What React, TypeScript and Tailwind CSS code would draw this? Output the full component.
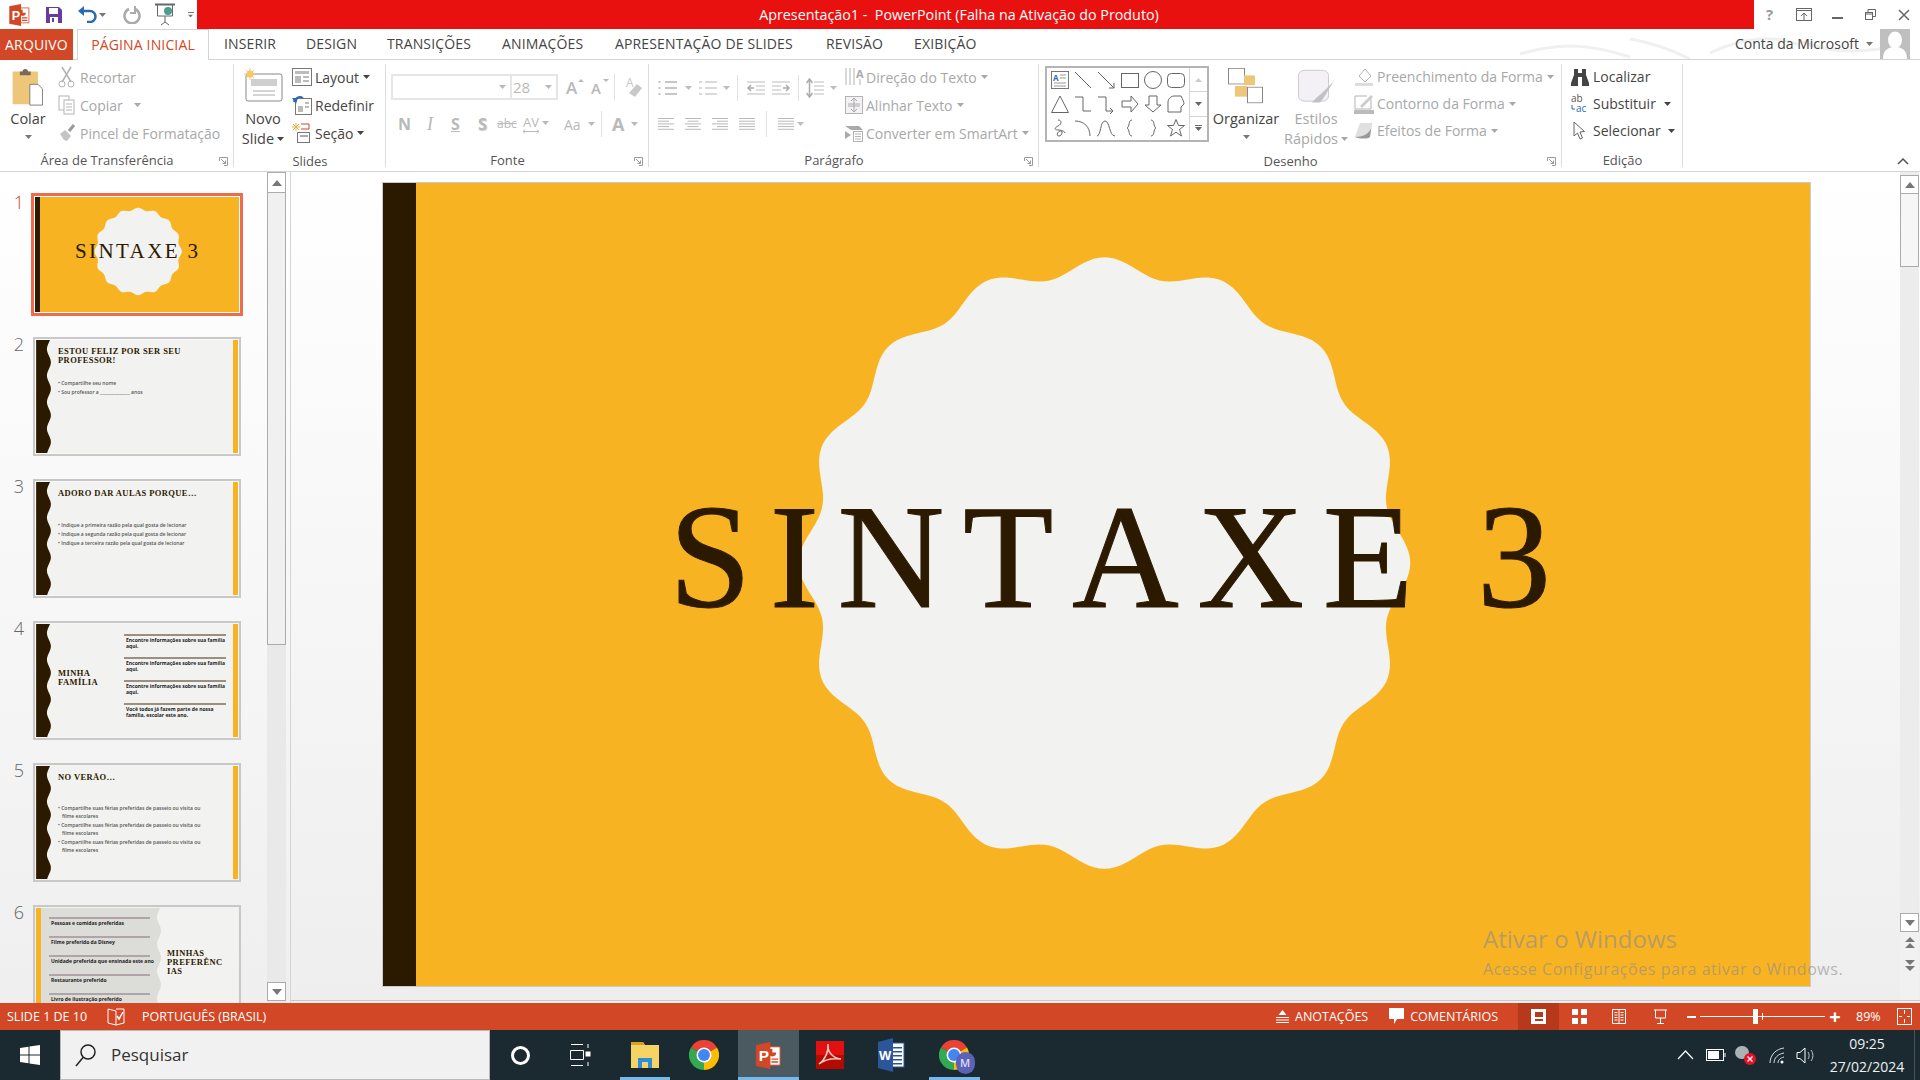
import { ReactNode } from "react";

const sans = "font-['Open_Sans','Noto_Sans',sans-serif]";
const serif = "font-['Liberation_Serif',serif]";

// scalloped badge of the title slide
function badgePath(cx: number, cy: number, r: number, amp: number) {
  const pts: string[] = [];
  for (let i = 0; i < 360; i++) {
    const t = (i * Math.PI) / 180;
    const rad = r + amp * Math.cos(16 * t);
    pts.push(`${(cx + rad * Math.sin(t)).toFixed(1)} ${(cy - rad * Math.cos(t)).toFixed(1)}`);
  }
  return "M" + pts.join("L") + "Z";
}

function wavePath(w: number, h: number, amp: number, period: number) {
  let d = "M0 0";
  for (let y = 0; y <= h; y += 1) {
    const x = w - amp / 2 + (amp / 2) * Math.cos((y * 2 * Math.PI) / period + 1);
    d += `L${x.toFixed(2)} ${y}`;
  }
  return d + `L0 ${h}Z`;
}

function Caret({ className = "" }: { className?: string }) {
  return (
    <svg width="7" height="4" viewBox="0 0 7 4" className={`shrink-0 ${className}`}>
      <path d="M0 0h7L3.5 4z" fill="currentColor" />
    </svg>
  );
}

function Launcher({ className = "" }: { className?: string }) {
  return (
    <svg width="9" height="9" viewBox="0 0 9 9" className={className} fill="none" stroke="#9a9a9a">
      <path d="M.5 4V.5H8.500V8.500H5" />
      <path d="M2 2l4.500 4.500M6.500 3.500v3h-3" />
    </svg>
  );
}

function Ico({ w = 20, h = 20, children }: { w?: number; h?: number; children: ReactNode }) {
  return (
    <svg width={w} height={h} viewBox={`0 0 ${w} ${h}`} fill="none" className="shrink-0 overflow-visible">
      {children}
    </svg>
  );
}

function PptLogo({ w = 26, h = 28 }: { w?: number; h?: number }) {
  return (
    <svg width={w} height={h} viewBox="0 0 26 28">
      <rect x="11" y="5" width="14" height="19" fill="#fff" stroke="#d24726" />
      <path d="M17 7a4 4 0 1 0 4 4h-4z" fill="#d24726" />
      <path d="M16 17h7v1.500h-7zM16 20h7v1.500h-7z" fill="#d24726" />
      <path d="M0 3L15 0V28L0 25z" fill="#d24726" />
      <text x="3" y="20" fontSize="16" fontWeight="700" fill="#fff" fontFamily="Liberation Sans, sans-serif">
        P
      </text>
    </svg>
  );
}

function WordLogo() {
  return (
    <svg width="27" height="34" viewBox="0 0 27 34">
      <rect x="12" y="5" width="14" height="24" fill="#fff" stroke="#2b579a" />
      <path d="M15 9h9v1.500h-9zM15 13h9v1.500h-9zM15 17h9v1.500h-9zM15 21h9v1.500h-9zM15 25h9v1.500h-9z" fill="#2b579a" />
      <path d="M0 4L15 0V34L0 30z" fill="#2b579a" />
      <text x="1" y="22" fontSize="13" fontWeight="700" fill="#fff" fontFamily="Liberation Sans, sans-serif">
        W
      </text>
    </svg>
  );
}

function ChromeLogo({ size = 30 }: { size?: number }) {
  return (
    <svg width={size} height={size} viewBox="0 0 48 48">
      <path d="M24 24L3.200 12A24 24 0 0 1 44.800 12Z" fill="#ea4335" />
      <path d="M24 24L44.800 12A24 24 0 0 1 24 48Z" fill="#fbbc05" />
      <path d="M24 24L24 48A24 24 0 0 1 3.200 12Z" fill="#34a853" />
      <circle cx="24" cy="24" r="12" fill="#fff" />
      <circle cx="24" cy="24" r="9.500" fill="#4285f4" />
    </svg>
  );
}

function Row({
  icon,
  label,
  on = false,
  caret = false,
  h = "h-[28px]",
  gap = "gap-[5px]",
  caretClass = "ml-[1px]",
}: {
  icon: ReactNode;
  label: string;
  on?: boolean;
  caret?: boolean;
  h?: string;
  gap?: string;
  caretClass?: string;
}) {
  return (
    <div className={`flex items-center ${h} ${gap} ${on ? "text-[#444]" : "text-[#a8a8a8]"}`}>
      {icon}
      <span className="whitespace-nowrap">{label}</span>
      {caret && <Caret className={caretClass} />}
    </div>
  );
}

function Group({
  label,
  width,
  launcher = false,
  children,
}: {
  label: string;
  width: string;
  launcher?: boolean;
  children: ReactNode;
}) {
  return (
    <div className={`relative flex flex-col shrink-0 h-full pt-[4px] ${width}`}>
      <div className="h-[84px] flex">{children}</div>
      <div className={`mt-[4px] h-[20px] flex items-center justify-center text-[13px] text-[#555] ${launcher ? "pr-[20px]" : ""}`}>
        {label}
      </div>
      {launcher && <Launcher className="absolute right-[6px] bottom-[5px]" />}
      <div className="absolute right-0 top-[4px] bottom-[4px] w-px bg-[#dcdcdc]" />
    </div>
  );
}

function Shape({ children }: { children: ReactNode }) {
  return (
    <div className="flex items-center justify-center">
      <svg width="20" height="20" viewBox="0 0 20 20" fill="none" stroke="#666" strokeWidth="1">
        {children}
      </svg>
    </div>
  );
}

function BulletIcon({ numbered = false }: { numbered?: boolean }) {
  return (
    <Ico w={20} h={18}>
      {[0, 1, 2].map((i) => (
        <path
          key={i}
          d={`M${numbered ? 1 : 0.500} ${3 + i * 6}h${numbered ? 3 : 2}M7 ${3 + i * 6}h12`}
          stroke="#b5b5b5"
          strokeWidth={numbered ? 1 : 1.500}
        />
      ))}
    </Ico>
  );
}

function IndentIcon({ flip = false }: { flip?: boolean }) {
  return (
    <svg width="18" height="16" viewBox="0 0 18 16" fill="none" className={`shrink-0 ${flip ? "-scale-x-100" : ""}`} stroke="#bbb">
      <path d="M0 2h18M9 6h9M9 10h9M0 14h18" />
      <path d="M7 8H1M4 5L1 8l3 3" stroke="#aaa" strokeWidth="1.500" />
    </svg>
  );
}

function AlignIcon({ a }: { a: number }) {
  const rows = [16, 11, 16, 11, 16];
  return (
    <Ico w={16} h={14}>
      {rows.map((r, i) => {
        const w = a === 3 ? 16 : r;
        const x = a === 0 || a === 3 ? 0 : a === 1 ? (16 - w) / 2 : 16 - w;
        return <path key={i} d={`M${x} ${1.500 + i * 2.700}h${w}`} stroke="#b9b9b9" />;
      })}
    </Ico>
  );
}

function Ribbon() {
  const off = "#b3b3b3";
  return (
    <div className={`h-[112px] flex shrink-0 bg-white border-b border-[#d4d4d4] text-[14px] ${sans}`}>
      {/* Clipboard */}
      <Group label="Área de Transferência" width="w-[234px]" launcher>
        <div className="w-[56px] pt-[4px] flex flex-col items-center">
          <svg width="34" height="38" viewBox="0 0 34 42" className="shrink-0">
            <rect x="0" y="4" width="28" height="36" rx="1" fill="#eec67a" />
            <path d="M8 4h3a3 3 0 0 1 6 0h3v4H8z" fill="#7a6a5a" />
            <path d="M19 18h9l5 5v18H19z" fill="#fff" stroke="#777" />
          </svg>
          <span className="mt-[3px] leading-[20px] text-[#444] text-[14.500px]">Colar</span>
          <Caret className="mt-[6px] text-[#777]" />
        </div>
        <div className="ml-[2px] -mt-[1px] flex flex-col">
          <Row
            label="Recortar"
            icon={
              <Ico w={17} h={22}>
                <path d="M4 1l9 15M13 1L4 16" stroke={off} strokeWidth="1.500" />
                <circle cx="4" cy="18" r="3" stroke={off} />
                <circle cx="13" cy="18" r="3" stroke={off} />
              </Ico>
            }
          />
          <Row
            label="Copiar"
            caret
            caretClass="ml-[6px]"
            icon={
              <Ico w={17} h={20}>
                <rect x="1" y="1" width="10" height="14" fill="#fff" stroke={off} />
                <rect x="6" y="5" width="10" height="14" fill="#fff" stroke={off} />
                <path d="M8 9h6M8 12h6M8 15h6" stroke={off} />
              </Ico>
            }
          />
          <Row
            label="Pincel de Formatação"
            icon={
              <Ico w={17} h={18}>
                <path d="M2 10l5-4 6 6-4 5-3-1-2-3z" fill="#c4c4c4" />
                <path d="M11 7l5-6" stroke="#999" strokeWidth="3" />
              </Ico>
            }
          />
        </div>
      </Group>

      {/* Slides */}
      <Group label="Slides" width="w-[152px]">
        <div className="w-[54px] pl-[4px] pt-[4px] flex flex-col items-center">
          <svg width="40" height="34" viewBox="0 0 40 34" className="shrink-0">
            <rect x="3" y="6" width="36" height="27" rx="2" fill="#fff" stroke="#888" />
            <rect x="8" y="11" width="26" height="7" fill="#cfcfcf" />
            <path d="M10 23h22M10 27h22" stroke="#aaa" />
            <circle cx="7" cy="6" r="3.500" fill="#f5c76a" />
            <path d="M7 0v12M1 6h12M3 2l8 8M11 2l-8 8" stroke="#f5c76a" />
          </svg>
          <span className="mt-[7px] leading-[20px] text-[#444] text-[14.500px]">Novo</span>
          <span className="flex items-center gap-[3px] leading-[20px] text-[#444] text-[14.500px] whitespace-nowrap">
            Slide <Caret />
          </span>
        </div>
        <div className="ml-[4px] -mt-[1px] flex flex-col">
          <Row
            on
            caret
            gap="gap-[3px]"
            label="Layout"
            icon={
              <Ico w={20} h={20}>
                <rect x=".5" y="1.500" width="19" height="17" stroke="#777" fill="#fff" />
                <path d="M3 4h14v3H3z" fill="#bbb" />
                <path d="M3 9h6v7H3zM11 9h6v2h-6zM11 13h6v2h-6z" fill="#bbb" />
              </Ico>
            }
          />
          <Row
            on
            gap="gap-[3px]"
            label="Redefinir"
            icon={
              <Ico w={20} h={22}>
                <rect x="3.500" y="4.500" width="16" height="16" stroke="#777" fill="#fff" />
                <path d="M6 12h5v6H6zM13 8h4v2h-4zM13 12h4v2h-4z" fill="#bbb" />
                <path d="M2 8a6 6 0 0 1 9-4" stroke="#2b6cb0" strokeWidth="2" />
                <path d="M0 4l4 6 2-6z" fill="#2b6cb0" />
              </Ico>
            }
          />
          <Row
            on
            caret
            gap="gap-[3px]"
            label="Seção"
            icon={
              <Ico w={20} h={22}>
                <path d="M4 1v8M0 5h8M1 2l6 6M7 2L1 8" stroke="#e9b44c" />
                <path d="M9 2h8v5H9" stroke="#d24726" />
                <rect x="5.500" y="10.500" width="12" height="10" stroke="#777" fill="#fff" />
                <rect x="8" y="13" width="8" height="2" fill="#aaa" />
              </Ico>
            }
          />
        </div>
      </Group>

      {/* Fonte */}
      <Group label="Fonte" width="w-[263px]" launcher>
        <div className="pl-[5px] flex flex-col text-[#b9b9b9]">
          <div className="mt-[10px] h-[26px] flex items-center">
            <div className="w-[167px] h-[26px] flex border-2 border-[#e6e6e6]">
              <div className="w-[119px] flex items-center justify-end pr-[4px] border-r-2 border-[#e6e6e6]">
                <Caret />
              </div>
              <div className="flex-1 flex items-center justify-between pl-[1px] pr-[4px] text-[15px] leading-none">
                28 <Caret />
              </div>
            </div>
            <div className="ml-[7px] w-[25px]">
              <Ico w={20} h={20}>
                <text x="1" y="17" fontSize="17" fontWeight="600" fill="#b9b9b9">A</text>
                <path d="M13 5l3-3 3 3z" fill="#b9b9b9" />
              </Ico>
            </div>
            <div className="w-[24px]">
              <Ico w={20} h={20}>
                <text x="1" y="17" fontSize="15" fontWeight="600" fill="#b9b9b9">A</text>
                <path d="M13 2l3 3 3-3z" fill="#b9b9b9" />
              </Ico>
            </div>
            <div className="w-px h-[26px] bg-[#e2e2e2]" />
            <div className="ml-[10px]">
              <Ico w={18} h={22}>
                <text x="1" y="11" fontSize="12" fill="#c8c8c8">A</text>
                <path d="M4 17l8-9 5 4-7 9z" fill="#c8c8c8" />
              </Ico>
            </div>
          </div>
          <div className="mt-[10px] h-[28px] flex items-center text-[16px]">
            <span className="w-[28px] pl-[7px] font-bold">N</span>
            <span className={`w-[26px] pl-[8px] italic ${serif} text-[18px]`}>I</span>
            <span className="w-[26px] pl-[6px] font-bold underline">S</span>
            <span className="w-[26px] pl-[7px] font-bold [text-shadow:1px_1px_1px_#ccc]">S</span>
            <span className="w-[26px] text-[12px] line-through">abc</span>
            <span className="w-[41px] flex items-start gap-[3px]">
              <span className="flex flex-col items-center text-[13px] leading-[14px]">
                AV
                <svg width="16" height="5" viewBox="0 0 16 5" fill="none" stroke="#b9b9b9">
                  <path d="M0 2.500h16M2 .5L0 2.500l2 2M14 .5l2 2-2 2" />
                </svg>
              </span>
              <Caret className="mt-[6px]" />
            </span>
            <span className="w-[24px] text-[14px]">Aa</span>
            <Caret className="mr-[6px]" />
            <div className="w-px h-[26px] bg-[#e2e2e2]" />
            <span className="ml-[10px] text-[18px] font-bold">A</span>
            <Caret className="ml-[7px]" />
          </div>
        </div>
      </Group>

      {/* Parágrafo */}
      <Group label="Parágrafo" width="w-[390px]" launcher>
        <div className="pl-[9px] w-[196px] flex flex-col">
          <div className="mt-[9px] h-[30px] flex items-center text-[#bdbdbd]">
            <BulletIcon />
            <Caret className="ml-[7px] mr-[6px]" />
            <BulletIcon numbered />
            <Caret className="ml-[5px] mr-[7px]" />
            <div className="w-px h-[26px] bg-[#e2e2e2]" />
            <div className="ml-[9px] mr-[7px]"><IndentIcon /></div>
            <IndentIcon flip />
            <div className="ml-[8px] w-px h-[26px] bg-[#e2e2e2]" />
            <svg width="18" height="20" viewBox="0 0 18 20" fill="none" stroke="#bbb" className="ml-[7px] shrink-0">
              <path d="M8 4h10M8 8h10M8 12h10M8 16h10" />
              <path d="M3.500 1v18M0.500 5l3-4 3 4M0.500 15l3 4 3-4" stroke="#aaa" strokeWidth="1.500" />
            </svg>
            <Caret className="ml-[6px]" />
          </div>
          <div className="mt-[6px] h-[30px] flex items-center gap-[11px] text-[#bdbdbd]">
            <AlignIcon a={0} />
            <AlignIcon a={1} />
            <AlignIcon a={2} />
            <AlignIcon a={3} />
            <div className="w-px h-[26px] bg-[#e2e2e2]" />
            <div className="flex items-center gap-[3px]">
              <AlignIcon a={3} />
              <Caret />
            </div>
          </div>
        </div>
        <div className="-mt-[1px] flex flex-col">
          <Row
            label="Direção do Texto"
            caret
            gap="gap-[3px]"
            icon={
              <Ico w={18} h={20}>
                <path d="M1 1v17M5 1v17M9 1v17" stroke={off} />
                <text x="11" y="11" fontSize="11" fill="#aaa" fontWeight="700">A</text>
                <path d="M15 12v6" stroke={off} />
              </Ico>
            }
          />
          <Row
            label="Alinhar Texto"
            caret
            gap="gap-[3px]"
            icon={
              <Ico w={18} h={20}>
                <rect x=".5" y="1.500" width="17" height="17" stroke={off} fill="#f4f1f6" />
                <path d="M9 3v14M6 6l3-3 3 3M6 14l3 3 3-3M3 9h12M3 11h12" stroke="#aaa" />
              </Ico>
            }
          />
          <Row
            label="Converter em SmartArt"
            caret
            gap="gap-[3px]"
            icon={
              <Ico w={18} h={20}>
                <path d="M0 3h14l4 4H6z" fill="#aaa" />
                <rect x="8.500" y="8.500" width="9" height="10" stroke={off} fill="#fff" />
                <path d="M10 11h6M10 13.500h6M10 16h6" stroke={off} />
                <path d="M0 8l6 4-6 4z" fill="#aaa" />
              </Ico>
            }
          />
        </div>
      </Group>

      {/* Desenho */}
      <Group label="Desenho" width="w-[523px]" launcher>
        <div className="ml-[6px] mt-[2px] w-[164px] h-[76px] flex border-2 border-[#b4b4b4] shrink-0">
          <div className="flex-1 grid grid-cols-6 grid-rows-3 px-[1px]">
            <Shape>
              <rect x="1.500" y="1.500" width="17" height="17" stroke="#777" />
              <text x="3" y="11" fontSize="8" fill="#2b6cb0" stroke="none" fontWeight="700">A</text>
              <path d="M10 5h6M10 8h6M4 13h12M4 16h12" stroke="#999" />
            </Shape>
            <Shape><path d="M2 2l16 16" /></Shape>
            <Shape><path d="M2 2l16 16M18 13v5h-5" /></Shape>
            <Shape><rect x="1.500" y="3.500" width="17" height="14" /></Shape>
            <Shape><circle cx="10" cy="10" r="8.500" /></Shape>
            <Shape><rect x="1.500" y="3.500" width="17" height="14" rx="4" /></Shape>
            <Shape><path d="M10 2L18.500 18.500H1.500z" /></Shape>
            <Shape><path d="M2 3h8v14h8" /></Shape>
            <Shape><path d="M2 3h8v14h7M14 14l3 3-3 3" /></Shape>
            <Shape><path d="M2 7h9V2l7 8-7 8v-5H2z" /></Shape>
            <Shape><path d="M6 2h8v9h4l-8 7-8-7h4z" /></Shape>
            <Shape><path d="M2 18V8c0-3 3-6 6-6h7c2 4 3 6 3 8l-3 3v5z" /></Shape>
            <Shape><path d="M8 2c4 0 4 4 0 6s-4 4 1 4 3 6 0 6-2-4 1-5 5 1 5 2" /></Shape>
            <Shape><path d="M2 3c9 0 15 6 15 15" /></Shape>
            <Shape><path d="M1 18c4 0 3-15 8-15s4 15 10 15" /></Shape>
            <Shape><path d="M12 2c-4 0-2 7-5 8 3 1 1 8 5 8" /></Shape>
            <Shape><path d="M8 2c4 0 2 7 5 8-3 1-1 8-5 8" /></Shape>
            <Shape><path d="M10 1.500l2.500 6h6l-5 4 2 6.500-5.500-3.800L4.500 18l2-6.500-5-4h6z" /></Shape>
          </div>
          <div className="w-[18px] flex flex-col border-l border-[#d4d4d4] text-[#666]">
            <div className="flex-1 flex items-center justify-center border-b border-[#d4d4d4] text-[#ccc]"><Caret className="rotate-180" /></div>
            <div className="flex-1 flex items-center justify-center border-b border-[#d4d4d4]"><Caret /></div>
            <div className="flex-1 flex flex-col items-center justify-center gap-[1px]">
              <div className="w-[7px] h-px bg-[#666]" />
              <Caret />
            </div>
          </div>
        </div>
        <div className="ml-[2px] w-[70px] pt-[4px] flex flex-col items-center shrink-0">
          <svg width="36" height="36" viewBox="0 0 36 44" preserveAspectRatio="none" className="shrink-0">
            <rect x="0.500" y="0.500" width="16" height="19" fill="#fff" stroke="#888" />
            <rect x="16" y="9" width="11" height="12" fill="#eec67a" />
            <rect x="7" y="22" width="12" height="13" fill="#eec67a" />
            <rect x="19.500" y="23.500" width="15" height="19" fill="#fff" stroke="#888" />
          </svg>
          <span className="mt-[5px] leading-[20px] text-[#444] text-[14.500px]">Organizar</span>
          <Caret className="mt-[6px] text-[#777]" />
        </div>
        <div className="w-[70px] pt-[5px] flex flex-col items-center text-[#a8a8a8] text-[14.500px] shrink-0">
          <svg width="36" height="36" viewBox="0 0 36 42" preserveAspectRatio="none" className="shrink-0">
            <rect x="0.500" y="1.500" width="30" height="36" rx="6" fill="#f3f0f6" stroke="#c9c9c9" />
            <path d="M36 14L24 28l-5 5-5 6h8l4-6z" fill="#c2c2c2" />
          </svg>
          <span className="leading-[20px] mt-[4px]">Estilos</span>
          <span className="leading-[20px] flex items-center gap-[3px] whitespace-nowrap">
            Rápidos <Caret />
          </span>
        </div>
        <div className="ml-[3px] -mt-[1px] flex flex-col">
          <Row
            label="Preenchimento da Forma"
            caret
            h="h-[27px]"
            gap="gap-[3px]"
            icon={
              <Ico w={20} h={20}>
                <path d="M5 9l6-7 6 7-6 6z" stroke={off} />
                <path d="M1 16h18v3H1z" fill="#ddd" />
              </Ico>
            }
          />
          <Row
            label="Contorno da Forma"
            caret
            h="h-[27px]"
            gap="gap-[3px]"
            icon={
              <Ico w={20} h={20}>
                <path d="M17 5v10H1V2h12" stroke={off} />
                <path d="M6 12L17 1l2 2L8 14z" fill="#ccc" />
                <path d="M0 16h20v4H0z" fill="#bbb" />
              </Ico>
            }
          />
          <Row
            label="Efeitos de Forma"
            caret
            h="h-[27px]"
            gap="gap-[3px]"
            icon={
              <Ico w={20} h={20}>
                <path d="M6 2h12l-2 14H1z" fill="#e0e0e0" />
                <path d="M1 16C6 18 14 18 16 16l2-14c0 10-8 14-17 14z" fill="#999" />
              </Ico>
            }
          />
        </div>
      </Group>

      {/* Edição */}
      <Group label="Edição" width="w-[121px]">
        <div className="pl-[9px] -mt-[1px] flex flex-col">
          <Row
            on
            label="Localizar"
            h="h-[27px]"
            gap="gap-[4px]"
            icon={
              <Ico w={18} h={18}>
                <path d="M3 1h4v4h4V1h4v6l3 8v3h-7V9H7v9H0v-3l3-8z" fill="#444" />
              </Ico>
            }
          />
          <Row
            on
            caret
            caretClass="ml-[4px]"
            label="Substituir"
            h="h-[27px]"
            gap="gap-[4px]"
            icon={
              <Ico w={18} h={22}>
                <text x="0" y="9" fontSize="10" fill="#555">ab</text>
                <text x="5" y="19" fontSize="10" fill="#2b6cb0">ac</text>
                <path d="M1 12v4h3" stroke="#2b6cb0" />
              </Ico>
            }
          />
          <Row
            on
            caret
            label="Selecionar"
            h="h-[27px]"
            gap="gap-[6px]"
            icon={
              <Ico w={16} h={20}>
                <path d="M3 1v14l3.500-3 2.500 6 2.500-1-2.500-6 4.500-.5z" stroke="#666" />
              </Ico>
            }
          />
        </div>
      </Group>

      <div className="flex-1 relative">
        <svg width="12" height="7" viewBox="0 0 12 7" className="absolute right-[11px] bottom-[6px]" fill="none" stroke="#555" strokeWidth="1.500">
          <path d="M1 6l5-5 5 5" />
        </svg>
      </div>
    </div>
  );
}

function TitleBar() {
  return (
    <div className={`h-[29px] flex shrink-0 bg-white ${sans}`}>
      <div className="w-[197px] flex items-center pl-[9px]">
        <PptLogo w={21} h={22} />
        <svg width="18" height="18" viewBox="0 0 18 18" className="ml-[15px]">
          <path d="M1 1h13l3 3v13H1z" fill="#6b3a9e" />
          <rect x="4" y="2" width="9" height="6" fill="#fff" />
          <rect x="5" y="11" width="8" height="6" fill="#fff" />
          <rect x="7" y="12" width="2" height="4" fill="#6b3a9e" />
        </svg>
        <svg width="19" height="17" viewBox="0 0 19 17" fill="none" className="ml-[15px]">
          <path d="M4 5h8a5.500 5.500 0 0 1 0 11H9" stroke="#2b6cb0" strokeWidth="2.500" />
          <path d="M6 0v10L0 5z" fill="#2b6cb0" />
        </svg>
        <Caret className="ml-[2px] text-[#777]" />
        <svg width="18" height="19" viewBox="0 0 18 19" fill="none" className="ml-[17px]">
          <path d="M6 4a7.500 7.500 0 1 0 6 0" stroke="#aaa" strokeWidth="2.500" />
          <path d="M12 1v7h-5" stroke="#aaa" strokeWidth="2" />
        </svg>
        <svg width="20" height="24" viewBox="0 0 20 24" fill="none" className="ml-[14px]">
          <path d="M0 1.500h20" stroke="#666" strokeWidth="2" />
          <path d="M2.500 2v11h15V2" stroke="#666" />
          <circle cx="13" cy="8" r="4" fill="#4a9e8e" />
          <path d="M10 13v6M6 22l4-3 4 3" stroke="#666" />
        </svg>
        <div className="ml-[12px] flex flex-col items-center gap-[1px] text-[#777]">
          <div className="w-[6px] h-px bg-[#777]" />
          <Caret className="scale-75" />
        </div>
      </div>
      <div className="flex-1 flex items-center justify-center pr-[33px] bg-[#e91010] text-white text-[14.300px] whitespace-pre">
        Apresentação1 -  PowerPoint (Falha na Ativação do Produto)
      </div>
      <div className="w-[166px] flex items-center text-[#666]">
        <span className="w-[33px] pl-[12px] text-[15px] font-bold text-[#999]">?</span>
        <div className="w-[34px] flex justify-center">
          <svg width="16" height="13" viewBox="0 0 16 13" fill="none" stroke="#666">
            <rect x=".5" y=".5" width="15" height="12" />
            <path d="M0 2.500h16M8 12V5M5 8l3-3 3 3" />
          </svg>
        </div>
        <div className="w-[33px] flex justify-center pt-[7px]">
          <div className="w-[11px] h-[2px] bg-[#666]" />
        </div>
        <div className="w-[33px] flex justify-center">
          <svg width="11" height="11" viewBox="0 0 11 11" fill="none" stroke="#666">
            <rect x=".5" y="3.500" width="7" height="7" />
            <path d="M3 3V.5h7.500v7H8M0.500 5h7" />
          </svg>
        </div>
        <div className="w-[33px] flex justify-center">
          <svg width="12" height="12" viewBox="0 0 12 12" fill="none" stroke="#666" strokeWidth="1.500">
            <path d="M1 1l10 10M11 1L1 11" />
          </svg>
        </div>
      </div>
    </div>
  );
}

const tabs = [
  { name: "INSERIR", w: "w-[82px]" },
  { name: "DESIGN", w: "w-[81px]" },
  { name: "TRANSIÇÕES", w: "w-[115px]" },
  { name: "ANIMAÇÕES", w: "w-[113px]" },
  { name: "APRESENTAÇÃO DE SLIDES", w: "w-[211px]" },
  { name: "REVISÃO", w: "w-[88px]" },
  { name: "EXIBIÇÃO", w: "w-[90px]" },
];

function TabBar() {
  return (
    <div className={`relative h-[31px] flex shrink-0 bg-white border-b border-[#d4d4d4] text-[14px] tracking-[0.15px] ${sans}`}>
      <svg className="absolute right-0 top-0" width="420" height="30" viewBox="0 0 420 30" fill="none" stroke="#f0f0f0" strokeWidth="3">
        <path d="M20 25c40-12 70-10 110 3M130 10c30 5 50 15 60 20M210 24c30-14 60-20 90-8M300 12c30 12 60 14 110 2" />
      </svg>
      <div className="w-[73px] h-[31px] flex items-center justify-center pb-[1px] bg-[#d24726] text-white">ARQUIVO</div>
      <div className="ml-[4px] w-[132px] h-[31px] flex items-center justify-center pb-[1px] border border-b-0 border-[#d4d4d4] bg-white text-[#d24726] whitespace-nowrap z-10">
        PÁGINA INICIAL
      </div>
      {tabs.map((t) => (
        <div key={t.name} className={`${t.w} pl-[15px] pb-[1px] flex items-center text-[#444] whitespace-nowrap`}>
          {t.name}
        </div>
      ))}
      <div className="relative ml-auto flex items-center h-[30px] tracking-normal text-[#444]">
        <span className="whitespace-nowrap pb-[2px]">Conta da Microsoft</span>
        <Caret className="ml-[7px] text-[#777]" />
        <div className="ml-[7px] mr-[10px] w-[30px] h-[30px] bg-[#bfbfbf] overflow-hidden">
          <svg width="30" height="30" viewBox="0 0 30 30">
            <ellipse cx="15" cy="11" rx="7" ry="8.500" fill="#fff" />
            <path d="M3 30c0-9 5-12 12-12s12 3 12 12z" fill="#fff" />
          </svg>
        </div>
      </div>
    </div>
  );
}

function SideWave({ color = "#2c1a00" }: { color?: string }) {
  return (
    <svg width="15" height="115" viewBox="0 0 15 115" className="shrink-0 h-full">
      <path d={wavePath(15, 115, 4, 27)} fill={color} />
    </svg>
  );
}

function ThumbShell({ num, active = false, children }: { num: number; active?: boolean; children: ReactNode }) {
  return (
    <div className="flex shrink-0">
      <div className={`w-[33px] pr-[9px] text-right text-[18px] leading-[14px] font-light ${active ? "text-[#d24726]" : "text-[#666]"} ${sans}`}>
        {num}
      </div>
      <div
        className={`w-[208px] h-[119px] shrink-0 border-2 overflow-hidden ${
          active ? "border-white outline-[3px] outline-solid outline-[#ee6c4d] outline-offset-[-1px]" : "border-[#c8c8c8] p-px"
        }`}
      >
        {children}
      </div>
    </div>
  );
}

const thumbHead = `${serif} font-bold text-[8.500px] leading-[9px] tracking-[0.4px] text-[#2c1a00]`;
const thumbBody = `${sans} font-semibold text-[5px] text-[#555]`;

function BulletSlide({ title, lines, tall = false }: { title: string[]; lines: string[]; tall?: boolean }) {
  return (
    <div className="w-full h-full flex bg-[#f2f2f0]">
      <SideWave />
      <div className="flex-1 pl-[7px] pt-[7px] min-w-0">
        <div className={`h-[32px] ${thumbHead}`}>
          {title.map((t) => (
            <div key={t}>{t}</div>
          ))}
        </div>
        {lines.map((l, i) =>
          tall ? (
            <div key={i} className={`${thumbBody} pr-[28px] pl-[4px] -indent-[4px] leading-[7.500px] mb-[2px]`}>
              • {l}
            </div>
          ) : (
            <div key={i} className={`${thumbBody} leading-[9px] whitespace-nowrap`}>
              • {l}
            </div>
          ),
        )}
      </div>
      <div className="w-[5px] bg-[#f8b323] shrink-0" />
    </div>
  );
}

function FamilySlide() {
  const rows = [
    "Encontre informações sobre sua família aqui.",
    "Encontre informações sobre sua família aqui.",
    "Encontre informações sobre sua família aqui.",
    "Você todos já fazem parte de nossa família, escolar este ano.",
  ];
  return (
    <div className="w-full h-full flex bg-[#f2f2f0]">
      <SideWave />
      <div className={`w-[73px] pl-[7px] pt-[45px] ${thumbHead}`}>
        MINHA
        <br />
        FAMÍLIA
      </div>
      <div className="w-[102px] pt-[10px]">
        {rows.map((r, i) => (
          <div key={i} className={`h-[23px] border-t-2 border-[#9a9080] pl-[2px] pt-[1px] ${sans} text-[5px] leading-[6px] font-bold text-[#222]`}>
            {r}
          </div>
        ))}
      </div>
      <div className="ml-auto w-[5px] bg-[#f8b323]" />
    </div>
  );
}

function PrefsSlide() {
  const rows = [
    "Pessoas e comidas preferidas",
    "Filme preferido da Disney",
    "Unidade preferida que ensinada este ano",
    "Restaurante preferido",
    "Livro de ilustração preferido",
  ];
  return (
    <div className="w-full h-full flex bg-[#f2f2f0]">
      <div className="w-[5px] bg-[#f8b323] shrink-0" />
      <div className="w-[115px] shrink-0 bg-[#dcdcd8] pl-[8px] pr-[6px] pt-[9px]">
        {rows.map((r) => (
          <div key={r} className={`h-[19px] border-t-2 border-[#b0a4a8] pl-[2px] pt-[1px] ${sans} text-[5px] leading-[6px] font-bold text-[#222] whitespace-nowrap`}>
            {r}
          </div>
        ))}
      </div>
      <svg width="5" height="115" viewBox="0 0 5 115" className="shrink-0">
        <path d={wavePath(5, 115, 4, 27)} fill="#dcdcd8" />
      </svg>
      <div className={`pl-[6px] pt-[41px] ${thumbHead}`}>
        MINHAS
        <br />
        PREFERÊNC
        <br />
        IAS
      </div>
    </div>
  );
}

function ScrollBtn({ up = false, className = "" }: { up?: boolean; className?: string }) {
  return (
    <div className={`h-[19px] flex items-center justify-center text-[#777] shrink-0 ${className}`}>
      <svg width="10" height="6" viewBox="0 0 10 6" className={up ? "rotate-180" : ""}>
        <path d="M0 0h10L5 6z" fill="currentColor" />
      </svg>
    </div>
  );
}

function ThumbPane() {
  return (
    <div className="w-[291px] h-full flex shrink-0 border-r border-[#d4d4d4] bg-gradient-to-b from-white to-[#efefef]">
      <div className="w-[267px] flex flex-col gap-[23px] pt-[23px] overflow-hidden shrink-0">
        <ThumbShell num={1} active>
          <div className="relative w-full h-full flex bg-[#f8b323]">
            <div className="w-[5px] bg-[#2c1a00]" />
            <svg viewBox="0 0 1428 803" className="absolute inset-0 w-full h-full">
              <path d={badgePath(722, 380, 297, 9)} fill="#f2f2f0" />
            </svg>
            <div className={`absolute left-[40px] top-[44px] text-[21px] leading-none tracking-[2.400px] text-[#2c1a00] whitespace-pre ${serif}`}>
              SINTAXE 3
            </div>
          </div>
        </ThumbShell>
        <ThumbShell num={2}>
          <BulletSlide title={["ESTOU FELIZ POR SER SEU", "PROFESSOR!"]} lines={["Compartilhe seu nome", "Sou professor a ______________ anos"]} />
        </ThumbShell>
        <ThumbShell num={3}>
          <BulletSlide
            title={["ADORO DAR AULAS PORQUE…"]}
            lines={[
              "Indique a primeira razão pela qual gosta de lecionar",
              "Indique a segunda razão pela qual gosta de lecionar",
              "Indique a terceira razão pela qual gosta de lecionar",
            ]}
          />
        </ThumbShell>
        <ThumbShell num={4}>
          <FamilySlide />
        </ThumbShell>
        <ThumbShell num={5}>
          <BulletSlide
            tall
            title={["NO VERÃO…"]}
            lines={[
              "Compartilhe suas férias preferidas de passeio ou visita ou filme escolares",
              "Compartilhe suas férias preferidas de passeio ou visita ou filme escolares",
              "Compartilhe suas férias preferidas de passeio ou visita ou filme escolares",
            ]}
          />
        </ThumbShell>
        <ThumbShell num={6}>
          <PrefsSlide />
        </ThumbShell>
      </div>
      <div className="w-[19px] h-full flex flex-col bg-[#e9e9e9] shrink-0">
        <ScrollBtn up className="h-[21px] bg-white border border-[#ababab]" />
        <div className="h-[452px] bg-[#f0f0f0] border border-t-0 border-[#ababab] shrink-0" />
        <div className="flex-1" />
        <ScrollBtn className="bg-white border border-[#ababab] mb-[2px]" />
      </div>
    </div>
  );
}

function MainSlide() {
  return (
    <div className="relative w-[1427px] h-[803px] flex shrink-0 bg-[#f8b323] shadow-[0_0_0_1px_#c8ccd0]">
      <div className="w-[33px] h-full bg-[#2c1a00]" />
      <svg viewBox="0 0 1428 803" className="absolute inset-0 w-full h-full">
        <path d={badgePath(722, 380, 297, 9)} fill="#f2f2f0" />
      </svg>
      <div
        className={`absolute left-[286px] top-[300px] text-[148px] leading-none tracking-[18.500px] [word-spacing:-10px] [font-kerning:none] [-webkit-text-stroke:1px_#2c1a00] text-[#2c1a00] whitespace-pre ${serif}`}
      >
        SINTAXE 3
      </div>
    </div>
  );
}

function Workspace() {
  return (
    <div className="relative flex-1 h-full flex bg-gradient-to-b from-white to-[#eeeeee]">
      <div className="flex-1 pl-[92px] pt-[11px] overflow-hidden">
        <MainSlide />
      </div>
      <div className="w-[19px] mr-[1px] h-full flex flex-col shrink-0 bg-[#ececec]">
        <ScrollBtn up className="mt-[3px] bg-white border border-[#ababab]" />
        <div className="h-[73px] bg-[#f6f6f6] border border-t-0 border-[#ababab] shrink-0" />
        <div className="flex-1" />
        <ScrollBtn className="bg-white border border-[#ababab]" />
        <div className="h-[71px] flex flex-col items-center pt-[5px] gap-[10px] text-[#777] bg-[#f1f1f1]">
          <svg width="12" height="12" viewBox="0 0 12 12"><path d="M6 0l5 5H1zM6 6l5 5H1z" fill="currentColor" /></svg>
          <svg width="12" height="12" viewBox="0 0 12 12"><path d="M1 1h10L6 6zM1 7h10l-5 5z" fill="currentColor" /></svg>
        </div>
      </div>
      <div className="absolute left-0 right-0 bottom-[2px] h-px bg-[#c8c8c8]" />
      <div className={`absolute left-[1192px] top-[751px] text-[#8c8c8c]/60 pointer-events-none ${sans}`}>
        <div className="text-[24px] leading-[32px]">Ativar o Windows</div>
        <div className="text-[16px] tracking-[0.55px] leading-[20px] mt-[4px] whitespace-nowrap">Acesse Configurações para ativar o Windows.</div>
      </div>
    </div>
  );
}

function StatusBar() {
  return (
    <div className={`h-[27px] flex items-center shrink-0 bg-[#d24726] text-white text-[12.500px] ${sans}`}>
      <span className="ml-[7px] pt-[1px] whitespace-nowrap">SLIDE 1 DE 10</span>
      <svg width="18" height="18" viewBox="0 0 18 18" fill="none" stroke="#fff" className="ml-[20px]">
        <path d="M9 3L1 1v14l8 2 8-2V1H9M9 3v14" />
        <path d="M10 8l2 3 4-7" strokeWidth="1.500" />
      </svg>
      <span className="ml-[17px] pt-[1px] whitespace-nowrap">PORTUGUÊS (BRASIL)</span>
      <div className="ml-auto flex items-center h-full">
        <svg width="13" height="13" viewBox="0 0 13 13" fill="none" stroke="#fff" className="mr-[6px]">
          <path d="M0 7.500h13M0 10h13M0 12.500h13" />
          <path d="M6.500 0l4 5h-8z" fill="#fff" stroke="none" />
        </svg>
        <span className="pt-[1px] whitespace-nowrap">ANOTAÇÕES</span>
        <svg width="15" height="17" viewBox="0 0 15 17" className="ml-[21px] mr-[6px]">
          <path d="M0 0h15v11H8l-3 5v-5H0z" fill="#fff" />
        </svg>
        <span className="pt-[1px] whitespace-nowrap">COMENTÁRIOS</span>
        <div className="ml-[20px] w-[41px] h-full flex items-center justify-center bg-[#b7391c]">
          <svg width="15" height="15" viewBox="0 0 15 15">
            <path d="M0 0h15v15H0z" fill="#fff" />
            <path d="M4 3h8v5H4zM4 10h8v2H4z" fill="#b7391c" />
          </svg>
        </div>
        <svg width="15" height="15" viewBox="0 0 15 15" className="ml-[13px]">
          <path d="M0 0h6v6H0zM9 0h6v6H9zM0 9h6v6H0zM9 9h6v6H9z" fill="#fff" />
        </svg>
        <svg width="14" height="15" viewBox="0 0 14 15" fill="none" stroke="#fff" className="ml-[25px]">
          <path d="M.5.5h13v14H.5zM7 .5v14M2.500 3.500h3M2.500 6h3M2.500 8.500h3M2.500 11h3M8.500 3.500h3M8.500 6h3M8.500 8.500h3M8.500 11h3" />
        </svg>
        <svg width="13" height="15" viewBox="0 0 13 15" fill="none" stroke="#fff" className="ml-[28px]">
          <path d="M0 1h13M1.500 1v8h10V1M6.500 9v5M3 14.500h7" />
        </svg>
        <div className="ml-[20px] w-[9px] h-[2px] bg-white" />
        <div className="relative ml-[4px] w-[125px] h-px bg-white">
          <div className="absolute left-[53px] top-[-7px] w-[5px] h-[15px] bg-white" />
          <div className="absolute left-[62px] top-[-3px] w-px h-[7px] bg-white" />
        </div>
        <div className="ml-[4px] text-[20px] leading-none font-bold w-[12px] flex items-center justify-center">+</div>
        <span className="ml-[15px] w-[26px] pt-[1px] whitespace-nowrap">89%</span>
        <svg width="15" height="17" viewBox="0 0 15 17" fill="none" stroke="#fff" className="ml-[15px] mr-[8px]">
          <rect x=".5" y=".5" width="14" height="16" />
          <path d="M7.500 2v4M7.500 11v4M2 8.500h3M10 8.500h3" />
        </svg>
      </div>
    </div>
  );
}

function TaskCell({ w, active = false, line = false, children }: { w: string; active?: boolean; line?: boolean; children: ReactNode }) {
  return (
    <div
      className={`${w} h-full flex items-center justify-center shrink-0 ${line ? "border-b-[3px] border-[#76b9ed] pt-[3px]" : ""} ${
        active ? "bg-[#4a5a60]" : ""
      }`}
    >
      {children}
    </div>
  );
}

function TaskBar() {
  return (
    <div className={`h-[50px] flex items-center shrink-0 bg-[#1b2a30] text-white ${sans}`}>
      <div className="w-[60px] flex justify-center">
        <svg width="20" height="20" viewBox="0 0 20 20">
          <path d="M0 3l8.500-1.300V9.500H0zM9.500 1.500L20 0v9.500H9.500zM0 10.500h8.500v7.800L0 17zM9.500 10.500H20V20L9.500 18.500z" fill="#fff" />
        </svg>
      </div>
      <div className="w-[430px] h-full flex items-center bg-[#f1f1f1] border border-[#b9b9b9] shrink-0">
        <svg width="22" height="24" viewBox="0 0 22 24" fill="none" stroke="#222" strokeWidth="1.500" className="ml-[14px]">
          <circle cx="13" cy="9" r="7" />
          <path d="M8 14.500L1 23" />
        </svg>
        <span className="ml-[14px] text-[17px] text-[#333]">Pesquisar</span>
      </div>
      <TaskCell w="w-[60px]">
        <div className="w-[19px] h-[19px] rounded-full border-[3px] border-white" />
      </TaskCell>
      <TaskCell w="w-[60px]">
        <svg width="21" height="24" viewBox="0 0 21 24" fill="none" stroke="#fff">
          <path d="M1 1.500h12M1 22.500h12M.5 7.500h13v9H.5zM18 1v4M18 19v4" />
          <rect x="16" y="9" width="4" height="4" fill="#fff" />
        </svg>
      </TaskCell>
      <div className="w-[10px] shrink-0" />
      <TaskCell w="w-[50px]" line>
        <svg width="28" height="28" viewBox="0 0 28 28">
          <path d="M0 1h12l2 3h14v23H0z" fill="#f6d365" />
          <path d="M0 1h12l2 3H0z" fill="#d9a021" />
          <path d="M7 17h14v10H7z" fill="#2a8fd8" />
          <path d="M11 21h6v6h-6z" fill="#f6d365" />
        </svg>
      </TaskCell>
      <TaskCell w="w-[68px]">
        <ChromeLogo />
      </TaskCell>
      <TaskCell w="w-[61px]" active line>
        <PptLogo w={27} h={27} />
      </TaskCell>
      <TaskCell w="w-[62px]">
        <svg width="28" height="28" viewBox="0 0 28 28" fill="none">
          <rect width="28" height="28" fill="#b30b00" />
          <rect width="28" height="14" fill="#e2100f" />
          <path d="M3 23c6-4 10-13 9-20-1 7 4 14 13 15-8-1-16 0-22 5z" stroke="#f4c9c4" strokeWidth="1.500" />
        </svg>
      </TaskCell>
      <TaskCell w="w-[61px]">
        <WordLogo />
      </TaskCell>
      <div className="w-[7px] shrink-0" />
      <TaskCell w="w-[51px]" line>
        <div className="relative w-[32px] h-[30px]">
          <ChromeLogo />
          <div className="absolute right-[-4px] bottom-[-4px] w-[19px] h-[22px] rounded-full bg-[#5b62b8] text-[11px] font-semibold flex items-center justify-center text-[#dcdcf5]">
            M
          </div>
        </div>
      </TaskCell>
      <div className="ml-auto h-full flex items-center">
        <svg width="17" height="10" viewBox="0 0 17 10" fill="none" stroke="#fff" strokeWidth="1.200">
          <path d="M1 9l7.500-8L16 9" />
        </svg>
        <svg width="20" height="12" viewBox="0 0 20 12" className="ml-[12px]" fill="none" stroke="#fff">
          <rect x=".5" y=".5" width="17" height="11" />
          <rect x="2" y="2" width="11" height="8" fill="#fff" stroke="none" />
          <path d="M19 4v4" />
        </svg>
        <div className="relative ml-[9px] w-[21px] h-[20px]">
          <div className="absolute left-0 top-[1px] w-[14px] h-[13px] rounded-full bg-[#a9b3b6]" />
          <svg width="12" height="12" viewBox="0 0 12 12" className="absolute right-0 bottom-0">
            <circle cx="6" cy="6" r="6" fill="#e81123" />
            <path d="M3.500 3.500l5 5M8.500 3.500l-5 5" stroke="#fff" strokeWidth="1.300" />
          </svg>
        </div>
        <svg width="16" height="17" viewBox="0 0 16 17" fill="none" stroke="#d8dcdd" className="ml-[13px]">
          <path d="M1 16C1 8 7 2 15 1M5 16c0-5 4-9 10-10M9 16c0-3 2-5 6-6" />
          <circle cx="13" cy="15" r="1.500" fill="#fff" stroke="none" />
        </svg>
        <svg width="20" height="19" viewBox="0 0 20 19" fill="none" stroke="#fff" className="ml-[11px]">
          <path d="M1 6.500h3L9 2v15l-5-4.500H1z" />
          <path d="M12 6c1.500 2 1.500 5 0 7M15 4c2.500 3 2.500 8 0 11" stroke="#c8c8c8" />
        </svg>
        <div className="ml-[6px] w-[90px] flex flex-col items-center text-[14px] leading-[23px] text-[#eef1f2]">
          <span>09:25</span>
          <span>27/02/2024</span>
        </div>
        <div className="ml-[2px] w-px h-full bg-[#465358]" />
        <div className="w-[5px]" />
      </div>
    </div>
  );
}

export default function App() {
  return (
    <div className="w-[1920px] h-[1080px] flex flex-col overflow-hidden bg-white">
      <TitleBar />
      <TabBar />
      <Ribbon />
      <div className="h-[831px] flex shrink-0 overflow-hidden">
        <ThumbPane />
        <Workspace />
      </div>
      <StatusBar />
      <TaskBar />
    </div>
  );
}
